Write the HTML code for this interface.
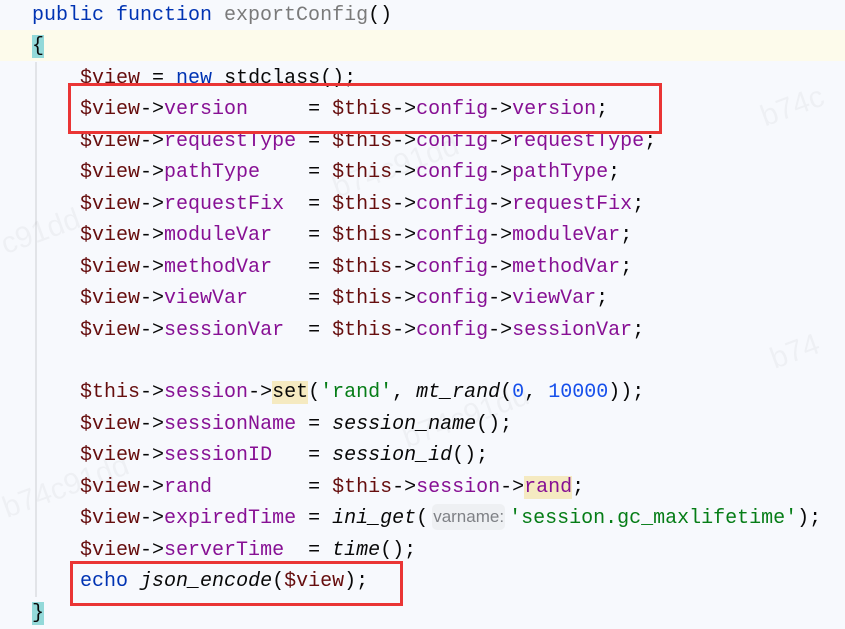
<!DOCTYPE html>
<html><head><meta charset="utf-8"><style>
html,body{margin:0;padding:0}
body{width:845px;height:626px;overflow:hidden;background:#f7f9fd;position:relative;font-family:"Liberation Mono",monospace;font-size:20px}
.cur{position:absolute;left:0;top:30px;width:845px;height:31px;background:#fdfbeb}
.guide{position:absolute;left:35px;top:62px;width:2px;height:535px;background:#e2e4e8}
.code{position:absolute;left:32px;top:0px;line-height:31.45px;white-space:pre;color:#080808}
.k{color:#0033b3}.fn{color:#7a7a7a}.v{color:#660e0e}.p{color:#871094}.n{color:#1750eb}.s{color:#067d17}.i{font-style:italic}
.bm{background:#93d9d9}.hl{background:#f5eac1}
.hint{display:inline-block;width:73px;height:26px;line-height:26px;vertical-align:1px;background:#eef0f3;border-radius:5px;color:#7f8186;font-family:"Liberation Sans",sans-serif;font-size:17px;text-align:center;margin:0 4px 0 4px}
.box{position:absolute;border:3px solid #ea3535;box-sizing:border-box}
.wm{position:absolute;color:rgba(0,0,0,0.035);font-family:"Liberation Sans",sans-serif;font-size:30px;transform:rotate(-20deg)}
</style></head><body>
<div class="cur"></div>
<div class="guide"></div>
<div class="wm" style="left:330px;top:150px">b74c91dd</div>
<div class="wm" style="left:0px;top:215px">c91dd</div>
<div class="wm" style="left:760px;top:90px">b74c</div>
<div class="wm" style="left:400px;top:400px">b74c91dd</div>
<div class="wm" style="left:0px;top:470px">b74c91dd</div>
<div class="wm" style="left:770px;top:335px">b74</div>
<div class="code"><span class="k">public function</span> <span class="fn">exportConfig</span>()
<span class="bm">{</span>
    <span class="v">$view</span> = <span class="k">new</span> stdclass();
    <span class="v">$view</span>-><span class="p">version</span>     = <span class="v">$this</span>-><span class="p">config</span>-><span class="p">version</span>;
    <span class="v">$view</span>-><span class="p">requestType</span> = <span class="v">$this</span>-><span class="p">config</span>-><span class="p">requestType</span>;
    <span class="v">$view</span>-><span class="p">pathType</span>    = <span class="v">$this</span>-><span class="p">config</span>-><span class="p">pathType</span>;
    <span class="v">$view</span>-><span class="p">requestFix</span>  = <span class="v">$this</span>-><span class="p">config</span>-><span class="p">requestFix</span>;
    <span class="v">$view</span>-><span class="p">moduleVar</span>   = <span class="v">$this</span>-><span class="p">config</span>-><span class="p">moduleVar</span>;
    <span class="v">$view</span>-><span class="p">methodVar</span>   = <span class="v">$this</span>-><span class="p">config</span>-><span class="p">methodVar</span>;
    <span class="v">$view</span>-><span class="p">viewVar</span>     = <span class="v">$this</span>-><span class="p">config</span>-><span class="p">viewVar</span>;
    <span class="v">$view</span>-><span class="p">sessionVar</span>  = <span class="v">$this</span>-><span class="p">config</span>-><span class="p">sessionVar</span>;

    <span class="v">$this</span>-><span class="p">session</span>-><span class="hl">set</span>(<span class="s">'rand'</span>, <span class="i">mt_rand</span>(<span class="n">0</span>, <span class="n">10000</span>));
    <span class="v">$view</span>-><span class="p">sessionName</span> = <span class="i">session_name</span>();
    <span class="v">$view</span>-><span class="p">sessionID</span>   = <span class="i">session_id</span>();
    <span class="v">$view</span>-><span class="p">rand</span>        = <span class="v">$this</span>-><span class="p">session</span>-><span class="hl p">rand</span>;
    <span class="v">$view</span>-><span class="p">expiredTime</span> = <span class="i">ini_get</span>(<span class="hint">varname:</span><span class="s">'session.gc_maxlifetime'</span>);
    <span class="v">$view</span>-><span class="p">serverTime</span>  = <span class="i">time</span>();
    <span class="k">echo</span> <span class="i">json_encode</span>(<span class="v">$view</span>);
<span class="bm">}</span></div>
<div class="box" style="left:68px;top:83px;width:594px;height:51px"></div>
<div class="box" style="left:70px;top:561px;width:333px;height:45px"></div>
</body></html>
